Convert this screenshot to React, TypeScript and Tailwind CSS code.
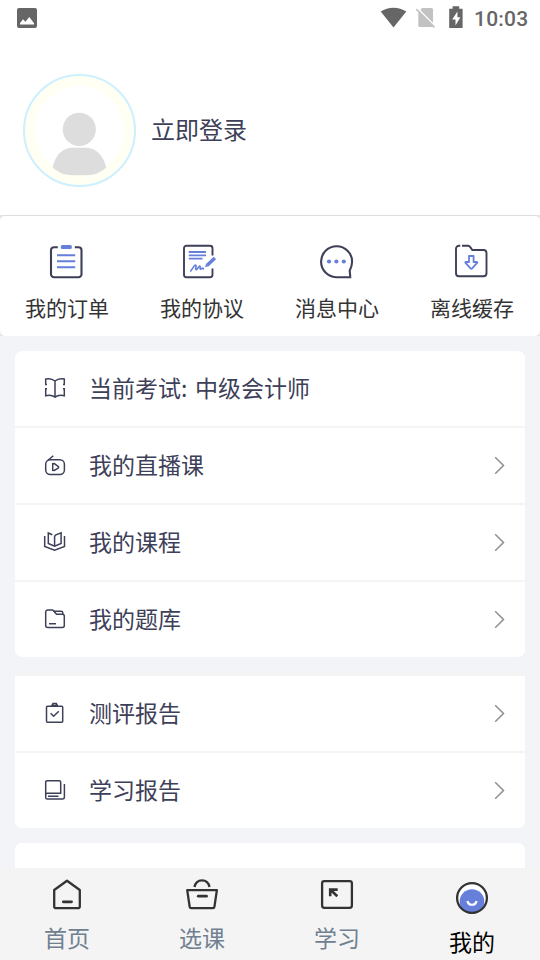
import React from "react";

const INK = "#3d4058";
const BLUE = "#667fdb";

interface MenuRow {
  label: string;
  icon: React.ReactNode;
  arrow?: boolean;
}

const StatusBar = () => (
  <div className="mb-px flex h-9 shrink-0 items-center justify-between pl-[17px] pr-[11px]">
    <svg width="20" height="20" viewBox="0 0 20 20">
      <rect width="20" height="20" rx="2" fill="#666" />
      <path d="M3 16.5v-1.3l3-4 2.4 2.6 3.9-4.8 4.7 6.2v1.3z" fill="#fff" />
    </svg>
    <div className="flex items-center">
      <svg width="86" height="24" viewBox="0 0 86 24">
        <path d="M0.7 5.6C8 .3 19 .3 26.3 5.6L13.5 21.6z" fill="#666" />
        <path d="M42 2h9.5a1.5 1.5 0 0 1 1.5 1.5v14.8L39.7 5z" fill="#c2c2c2" />
        <path d="M39.7 5L53 18.3V21H39.8a1.5 1.5 0 0 1-1.5-1.5V6.5z" fill="#c2c2c2" />
        <path d="M37 1.9l18.3 18.5" stroke="#fff" strokeWidth="1.5" />
        <path d="M36.3 3.2l18.2 18.2" stroke="#c2c2c2" strokeWidth="1.7" fill="none" />
        <path d="M69.2 2.8h3.4V.3h6.6v2.5h3.4V22H69.2z" fill="#666" />
        <path d="M77.4 5.5l-5.2 8h3.3v6l4.9-8.3h-3z" fill="#fff" />
      </svg>
      <span className="ml-[8px] w-[55px] translate-y-px whitespace-nowrap font-['Roboto'] text-[21px] font-medium leading-6 tracking-[0.2px] text-[#666]">
        10:03
      </span>
    </div>
  </div>
);

const OrderIcon = () => (
  <svg width="36" height="36" viewBox="0 0 36 36" fill="none" className="-translate-x-px">
    <path d="M9.8 3.2H6a3 3 0 0 0-3 3v24a3 3 0 0 0 3 3h24.500a3 3 0 0 0 3-3v-24a3 3 0 0 0-3-3h-3.700" stroke={INK} strokeWidth="2.1" />
    <rect x="12.8" y="1" width="11" height="4" rx="1.5" fill={BLUE} />
    <path d="M9 11.3h18.2M9 17.2h18.2M9 23.2h18.2" stroke={BLUE} strokeWidth="2" />
  </svg>
);

const AgreementIcon = () => (
  <svg width="36" height="36" viewBox="0 0 36 36" fill="none" className="-translate-x-0.5">
    <path d="M30.5 11.5V4.2a2.500 2.500 0 0 0-2.500-2.500H4.500A2.500 2.500 0 0 0 2 4.200v26.600a2.500 2.500 0 0 0 2.500 2.500H28a2.500 2.500 0 0 0 2.500-2.500v-6.300" stroke={INK} strokeWidth="1.9" />
    <path d="M6.8 8H24M6.8 11.3H24M6.8 14.7h13.7" stroke={BLUE} strokeWidth="1.8" />
    <path d="M8.7 27c2-2.5 3.500-6 4.800-6 1.600 0-.8 4.700.7 4.700 1.400 0 2.600-4.200 3.800-3.500.9.600-.6 3 .7 3 1 0 1.200-1.200 2-1.200.6 0 .2 1 .8 1" stroke={BLUE} strokeWidth="1.6" strokeLinecap="round" />
    <path d="M25.2 21.2l7.700-7.300" stroke={BLUE} strokeWidth="3.4" />
    <path d="M23 23.3l1-3.600 2.500 2.500z" fill={BLUE} />
  </svg>
);

const MessageIcon = () => (
  <svg width="36" height="36" viewBox="0 0 36 36" fill="none">
    <path d="M32.3 33.2H17A15.5 15.5 0 1 1 33.1 17.6c0 4-1.1 6.5-2.4 9.200l.6 6" stroke={INK} strokeWidth="2.1" />
    <circle cx="10" cy="17.5" r="2.1" fill={BLUE} />
    <circle cx="17.4" cy="17.5" r="2.1" fill={BLUE} />
    <circle cx="24.8" cy="17.5" r="2.1" fill={BLUE} />
  </svg>
);

const CacheIcon = () => (
  <svg width="36" height="36" viewBox="0 0 36 36" fill="none" className="-translate-x-px">
    <path d="M7.3 1.8H6a3 3 0 0 0-3 3v24.400a3 3 0 0 0 3 3h24.500a3 3 0 0 0 3-3V9a3 3 0 0 0-3-3H19.300l-2.200-3.100a2.400 2.400 0 0 0-2-1.100H9" stroke={INK} strokeWidth="1.9" />
    <path d="M16 12h4.600v6h3.100c.6 0 .8.500.4.900l-5 5.500c-.5.500-1.100.500-1.600 0l-5-5.500c-.4-.4-.2-.9.400-.9H16z" stroke={BLUE} strokeWidth="1.8" strokeLinejoin="round" />
  </svg>
);

const rowIcon = "mb-px h-6 w-6 shrink-0";
const rowStroke = { fill: "none", stroke: INK, strokeWidth: 1.5 };

const examRows: MenuRow[] = [
  {
    label: "当前考试: 中级会计师",
    icon: (
      <svg className={rowIcon} viewBox="0 0 24 24" {...rowStroke}>
        <path d="M2.7 8.5V3C6 2.3 9.5 2.8 12 5c2.5-2.2 6-2.7 9.3-2v5.5M2.7 13v6.7c3.3-.7 6.8-.5 9.3 1.5 2.5-2 6-2.2 9.3-1.500V13M12 5v16" />
        <path d="M2 8.6h2M2 12.8h2M20 8.6h2M20 12.8h2" />
      </svg>
    ),
  },
  {
    label: "我的直播课",
    arrow: true,
    icon: (
      <svg className={rowIcon} viewBox="0 0 24 24" {...rowStroke}>
        <rect x="2.7" y="6.7" width="18.7" height="14.8" rx="4.5" />
        <path d="M5 7.2l5.300-4.500M9.700 10.700v6.600l1.600.2 4.200-2.700v-1.200l-4.200-3z" />
      </svg>
    ),
  },
  {
    label: "我的课程",
    arrow: true,
    icon: (
      <svg className={rowIcon} viewBox="0 0 24 24" {...rowStroke}>
        <path d="M1.7 6v10.500l9.900 3.700 9.900-3.700V6" />
        <path d="M9.3 4.800L5.300 3v10.500l6.300 2.600 6.500-2.600V2.900l-5.200 2-1.300 1.400v9.800" />
      </svg>
    ),
  },
  {
    label: "我的题库",
    arrow: true,
    icon: (
      <svg className={rowIcon} viewBox="0 0 24 24" {...rowStroke}>
        <path d="M12 5.5l-1.600-2a1.600 1.600 0 0 0-1.200-.6H4.700a2 2 0 0 0-2 2v13.700a2 2 0 0 0 2 2h14.600a2 2 0 0 0 2-2V9.300a2 2 0 0 0-2-2H13.500z" />
        <path d="M10.5 4.200h7.700a1.600 1.600 0 0 1 1.600 1.600v1.500M6 16.700h7" />
      </svg>
    ),
  },
];

const reportRows: MenuRow[] = [
  {
    label: "测评报告",
    arrow: true,
    icon: (
      <svg className={rowIcon} viewBox="0 0 24 24" {...rowStroke}>
        <path d="M8 5.2H4.500a1 1 0 0 0-1 1v14a1 1 0 0 0 1 1h14.200a1 1 0 0 0 1-1v-14a1 1 0 0 0-1-1h-3.500M7.600 12.300l3 3 5.200-5" />
        <path d="M8.8 5h5.700L13.200 2.700h-3.100z" strokeWidth="1.8" />
      </svg>
    ),
  },
  {
    label: "学习报告",
    arrow: true,
    icon: (
      <svg className={rowIcon} viewBox="0 0 24 24" {...rowStroke}>
        <path d="M2.7 17V4.200a1.500 1.500 0 0 1 1.500-1.500h12a1.500 1.500 0 0 1 1.500 1.500v11H4.400a1.700 1.700 0 0 0-1.700 1.700v2.500a1.600 1.600 0 0 0 1.600 1.600h15.100a2 2 0 0 0 2-2V6M5 18.200h10.500" />
      </svg>
    ),
  },
];

const Row = ({ label, icon, arrow }: MenuRow) => (
  <div className="flex h-[75px] items-center bg-white pl-[28px] pr-[20px]">
    {icon}
    <span className="mb-[3px] ml-[22px] flex-1 whitespace-pre text-[23px] leading-[34px] text-[#3d4058] [word-spacing:2.5px]">
      {label}
    </span>
    {arrow && (
      <svg width="11" height="18" viewBox="0 0 11 18" className="mb-px">
        <path d="M1.2 1.300l8.300 8.200-8.300 8.200" fill="none" stroke="#8f8f8f" strokeWidth="1.5" />
      </svg>
    )}
  </div>
);

const shortcuts = [
  { label: "我的订单", icon: <OrderIcon /> },
  { label: "我的协议", icon: <AgreementIcon /> },
  { label: "消息中心", icon: <MessageIcon /> },
  { label: "离线缓存", icon: <CacheIcon /> },
];

const TabBar = () => (
  <nav className="grid h-[92px] shrink-0 grid-cols-4 bg-[#f4f4f4] text-[23px] leading-[34px] text-[#708090]">
    <div className="flex flex-col items-center pr-px pt-[9px]">
      <svg width="36" height="36" viewBox="0 0 36 36" fill="none" stroke="#333" strokeWidth="2.3">
        <path d="M5.2 13L18 3.800l12.800 9.200v16.200a2 2 0 0 1-2 2H7.200a2 2 0 0 1-2-2z" strokeLinejoin="round" />
        <path d="M14.3 24.800h8.200" strokeWidth="2.8" strokeLinecap="round" />
      </svg>
      <span className="mt-[7px]">首页</span>
    </div>
    <div className="flex flex-col items-center pr-px pt-[9px]">
      <svg width="36" height="36" viewBox="0 0 36 36" fill="none" stroke="#333" strokeWidth="2.3">
        <path d="M3.2 13.200h29.700l-2.500 16.700a1.500 1.500 0 0 1-1.500 1.300H7.200a1.500 1.500 0 0 1-1.500-1.300z" strokeLinejoin="round" />
        <path d="M10.5 10c.8-4 3.800-6.700 7.500-6.700s6.700 2.700 7.500 6.700" />
        <path d="M14.3 19.200h8.200" strokeWidth="2.8" strokeLinecap="round" />
      </svg>
      <span className="mt-[7px]">选课</span>
    </div>
    <div className="flex flex-col items-center pr-px pt-[9px]">
      <svg width="36" height="36" viewBox="0 0 36 36" fill="none" stroke="#333" strokeWidth="2.3">
        <rect x="3.1" y="4.1" width="29.8" height="26.7" rx="2.2" />
        <path d="M11.2 19.200V12.600h7.500M12 13.300l6.300 6" strokeWidth="2.6" />
      </svg>
      <span className="mt-[7px]">学习</span>
    </div>
    <div className="flex flex-col items-center pr-px pt-[12px] text-black">
      <svg width="36" height="36" viewBox="0 0 36 36" fill="none">
        <circle cx="18" cy="18" r="14.8" fill="#fff" />
        <circle cx="18" cy="21.5" r="12.3" fill={BLUE} />
        <circle cx="18" cy="18" r="14.9" stroke="#333" strokeWidth="2.3" />
        <path d="M13.5 21c.8 5 8.200 5 9 0" stroke="#fff" strokeWidth="2.2" />
      </svg>
      <span className="mt-[8px]">我的</span>
    </div>
  </nav>
);

const App = () => {
  return (
    <div className="flex h-[960px] w-[540px] flex-col overflow-hidden bg-[#f3f4f8] font-['Noto_Sans_CJK_SC',sans-serif]">
      <header className="flex h-[215px] shrink-0 flex-col bg-white">
        <StatusBar />
        <div className="flex items-center pl-[23px] pt-[37px]">
          <svg width="113" height="113" viewBox="0 0 113 113">
            <circle cx="56.5" cy="56.5" r="55.5" fill="#fffff3" stroke="#ccf0ff" strokeWidth="2" />
            <circle cx="56.5" cy="56.5" r="44.5" fill="#fff" />
            <circle cx="56.3" cy="55.3" r="16.6" fill="#ddd" />
            <path d="M30 92.5C32 81 40 72.700 49 72.700h15c9 0 17 8.300 19.500 19.800-6 5.500-13 7.700-19.500 7.700H49c-6.500 0-13-2.200-19-7.700z" transform="translate(-.3 1)" fill="#ddd" />
          </svg>
          <span className="mb-[4px] ml-[15px] text-[24px] leading-9 text-[#3d4058]">立即登录</span>
        </div>
      </header>

      <div className="shrink-0 bg-[#e4e4e6]">
        <section className="grid h-[121px] grid-cols-4 rounded-[5px] border-t border-[#dedede] bg-white">
          {shortcuts.map((s) => (
            <div key={s.label} className="flex flex-col items-center pr-px pt-[28px]">
              {s.icon}
              <span className="mt-[12px] text-[21px] leading-[30px] text-[#333]">{s.label}</span>
            </div>
          ))}
        </section>
      </div>

      <main className="min-h-0 flex-1 overflow-hidden px-[15px] pt-[15px]">
        <div className="flex flex-col gap-[2px] overflow-hidden rounded-[7px] bg-[#f4f4f4]">
          {examRows.map((r) => (
            <Row key={r.label} {...r} />
          ))}
        </div>
        <div className="mt-[15px] flex flex-col gap-[2px] overflow-hidden rounded-b-[7px] bg-[#f4f4f4] pt-[4px]">
          {reportRows.map((r) => (
            <Row key={r.label} {...r} />
          ))}
        </div>
        <div className="mt-[15px] h-[75px] rounded-[7px] bg-white" />
      </main>

      <TabBar />
    </div>
  );
};

export default App;
